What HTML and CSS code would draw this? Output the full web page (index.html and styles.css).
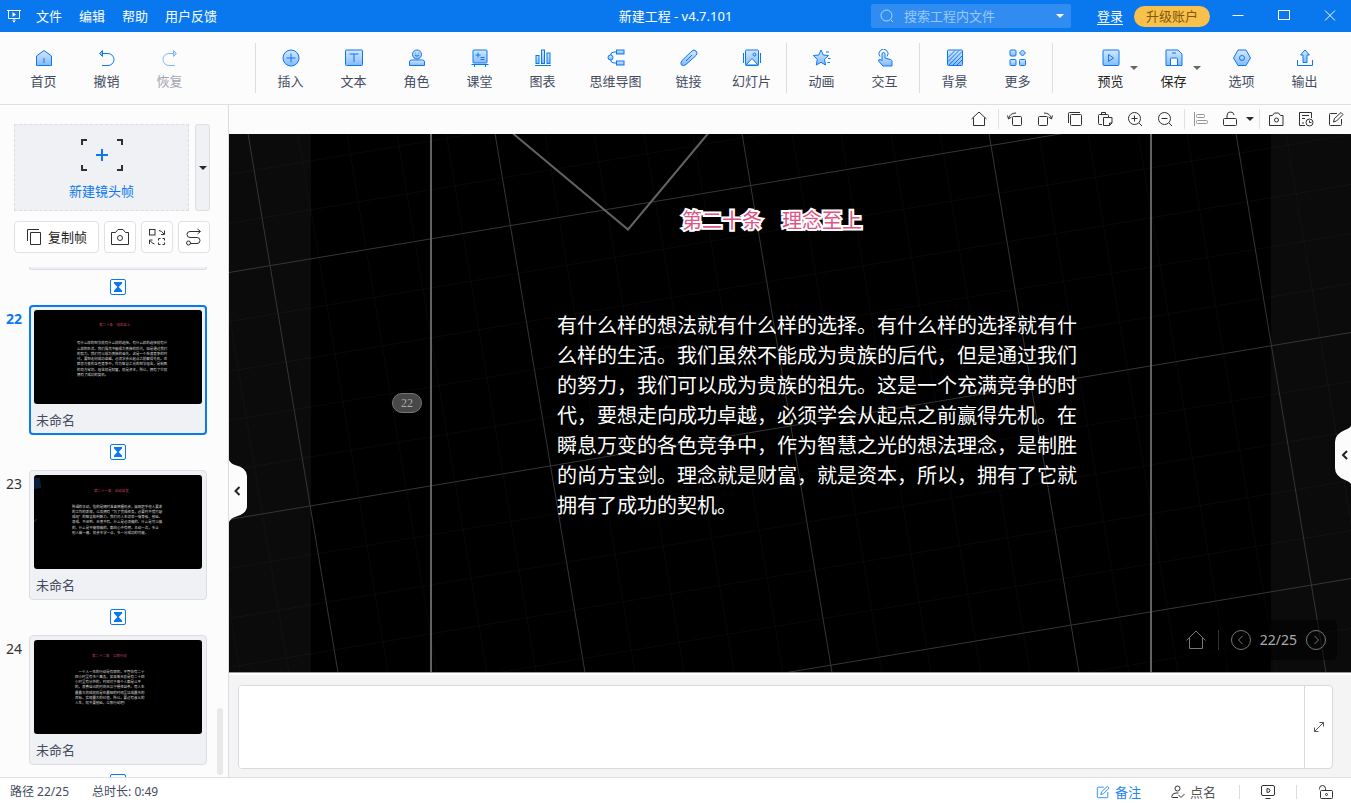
FILE: index.html
```html
<!DOCTYPE html>
<html lang="zh-CN">
<head>
<meta charset="utf-8">
<title>新建工程 - v4.7.101</title>
<link rel="stylesheet" href="styles.css">
</head>
<body>
<svg class="defs" width="0" height="0" aria-hidden="true">
  <defs>
    <linearGradient id="g" x1="0" y1="0" x2="0" y2="1"><stop offset="0" stop-color="#d5e8ff"/><stop offset="1" stop-color="#85bbfc"/></linearGradient>
    <symbol id="clock" viewBox="0 0 16 16"><rect x=".5" y=".5" width="15" height="15" rx="1.5" fill="#fff" stroke="#0a78f0"/><path d="M4 3h8v1.500L8.700 8 12 11.500V13H4v-1.500L7.300 8 4 4.500z" fill="#0a78f0"/></symbol>
  </defs>
</svg>

<header class="titlebar">
  <nav class="menu">
    <svg class="logo" width="14" height="14" viewBox="0 0 14 14" fill="none" stroke="#fff"><path d="M0 1.500h14M1.500 1.500v8h11v-8M7 9.500v4M5.500 11.500L7 13l1.500-1.500"/><path d="M5.500 3v5L9 5.500z" fill="#fff" stroke="none"/></svg>
    <button>文件</button><button>编辑</button><button>帮助</button><button>用户反馈</button>
  </nav>
  <h1 class="title">新建工程 - v4.7.101</h1>
  <div class="account">
    <label class="search">
      <svg width="14" height="14" viewBox="0 0 14 14" fill="none" stroke="#b5d8ff"><circle cx="6.500" cy="6.500" r="5.500"/><path d="M11 11l2 2"/></svg>
      <input type="text" placeholder="搜索工程内文件" aria-label="搜索工程内文件">
      <i class="caret light"></i>
    </label>
    <a class="login" href="#">登录</a>
    <button class="upgrade">升级账户</button>
    <div class="window-controls">
      <button aria-label="最小化"><svg width="12" height="12" viewBox="0 0 12 12" stroke="#fff"><path d="M.5 5.500h11"/></svg></button>
      <button aria-label="最大化"><svg width="12" height="12" viewBox="0 0 12 12" fill="none" stroke="#fff"><rect x=".5" y=".5" width="11" height="9"/></svg></button>
      <button aria-label="关闭"><svg width="12" height="12" viewBox="0 0 12 12" stroke="#fff"><path d="M1 .5l10 10M11 .5L1 10.500"/></svg></button>
    </div>
  </div>
</header>

<div class="toolbar">
  <div class="tools start">
    <button class="tool"><svg viewBox="0 0 18 18"><path d="M1.500 16.500V7L9 1.500 16.500 7v9.500z"/><path d="M9 9v5"/></svg>首页</button>
    <button class="tool open"><svg viewBox="0 0 18 18"><path d="M3 4.500h7a6 6 0 0 1 0 12H4"/><path d="M4.500 1.500L1.500 4.500l3 3z" fill="#85bbfc"/></svg>撤销</button>
    <button class="tool open off" disabled><svg viewBox="0 0 18 18"><path d="M14 4.500H8a6 6 0 0 0 0 12h6"/><path d="M12.500 1.500l3 3-3 3z" fill="#85bbfc"/></svg>恢复</button>
  </div>
  <div class="tools">
    <button class="tool"><svg viewBox="0 0 18 18"><circle cx="9" cy="9" r="8"/><path d="M9 4.500v9M4.500 9h9"/></svg>插入</button>
    <button class="tool"><svg viewBox="0 0 18 18"><rect x=".5" y="1" width="17" height="15.500" rx="1"/><path d="M4.500 5h9M9 5v8"/></svg>文本</button>
    <button class="tool"><svg viewBox="0 0 18 18"><circle cx="9" cy="5.500" r="4.500"/><path d="M1.500 16.500v-3.500q0-2 2-2h11q2 0 2 2v3.500z"/><path d="M7 6q2 2.500 4 0M7 4h.6M10.500 4h.6" fill="none"/></svg>角色</button>
    <button class="tool"><svg viewBox="0 0 18 18"><rect x="2" y="1" width="14" height="13" rx="1"/><path d="M.5 15.500h17M3.500 16v2M14.500 16v2M4.500 6h5M7 3.500v5M9.500 8.500h4M9.500 10.500h4"/></svg>课堂</button>
    <button class="tool"><svg viewBox="0 0 18 18"><rect x="2" y="6.500" width="3" height="8"/><rect x="7.500" y="1" width="3" height="13.500"/><rect x="13" y="4" width="3" height="10.500"/><path d="M1 16.500h16"/></svg>图表</button>
    <button class="tool wide"><svg viewBox="0 0 18 18"><path d="M9 3H7Q3.500 3 3.500 6.500M9 14H7q-3.500 0-3.500-4" fill="none"/><circle cx="3.500" cy="8.500" r="2.500"/><rect x="9.500" y="1" width="7.500" height="4"/><rect x="9.500" y="12" width="7.500" height="4"/></svg>思维导图</button>
    <button class="tool"><svg viewBox="0 0 18 18"><path d="M1.500 16q-1.500-2 .5-4.500L12 2q2-2 4 0t0 4.500L6 15.500q-2.500 2-4.500.5z"/><path d="M6 12l6-6"/></svg>链接</button>
    <button class="tool"><svg viewBox="0 0 18 18"><rect x="2.500" y="1" width="13" height="15.500" rx="1"/><path d="M.5 4v10M17.500 4v10"/><path d="M3 16l6-6.500 6 6.500z" fill="#fff"/><circle cx="11.500" cy="5.500" r="1.500"/></svg>幻灯片</button>
  </div>
  <div class="tools">
    <button class="tool"><svg viewBox="0 0 18 18"><path d="M8 1l2.200 5 5.300.5-4 3.800 1 5.700L8 13.300 3.300 16l1-5.700-4-3.800L5.800 6z"/><path d="M13 3h3M15 9.500h2.500M14.500 13.500h2.500"/></svg>动画</button>
    <button class="tool"><svg viewBox="0 0 18 18"><path d="M4 7.500A4.500 4.500 0 1 1 11 7.500" fill="none"/><path d="M6 11.500V5q0-1.500 1.500-1.500T9 5v4l5.500 1.500q1.500.5 1.500 2v4.500H7l-4.500-5q0-2 1.500-1.500z"/></svg>交互</button>
  </div>
  <div class="tools">
    <button class="tool"><svg viewBox="0 0 18 18"><rect x="1.500" y="1" width="15" height="15.500" rx="1"/><path d="M2 8.500L9 1.500M2 12.500L13 1.500M3 16L16 2.500M7 16l9-9M11 16l5-5"/></svg>背景</button>
    <button class="tool"><svg viewBox="0 0 18 18"><rect x="1" y="1" width="6" height="6" rx="1"/><path d="M13.500 1l3 3-3 3-3-3z"/><rect x="1" y="10.500" width="6" height="6" rx="1"/><rect x="10.500" y="10.500" width="6" height="6" rx="1"/></svg>更多</button>
  </div>
  <div class="tools end">
    <button class="tool dark"><svg viewBox="0 0 18 18"><rect x="1" y="1" width="16" height="15.500" rx="1"/><path d="M6.500 5.500v7l5-3.500z"/></svg>预览<i class="caret"></i></button>
    <button class="tool dark"><svg viewBox="0 0 18 18"><path d="M1 1h12l4 4v11.500H1z"/><path d="M5.500 16.500V10q0-1 1-1h5q1 0 1 1v6.500z" fill="#fff"/><path d="M7 4h4"/></svg>保存<i class="caret"></i></button>
    <button class="tool gap"><svg viewBox="0 0 18 18"><path d="M5 1h8l4.500 8-4.500 7.500H5L.5 9z"/><circle cx="9" cy="9" r="2.500"/></svg>选项</button>
    <button class="tool"><svg viewBox="0 0 18 18"><path d="M9 1l4.500 5H11v7.500H7V6H4.500z"/><path d="M1.500 11v5.500h15V11" fill="none"/></svg>输出</button>
  </div>
</div>

<main class="workspace">
  <aside class="sidebar">
    <div class="new-row">
      <button class="new-frame">
        <svg width="42" height="32" viewBox="0 0 42 32" fill="none"><path d="M1 6V1h5M36 1h5v5M1 26v5h5M36 31h5v-5" stroke="#303030" stroke-width="2"/><path d="M21 10v12M15 16h12" stroke="#0a78f0" stroke-width="2"/></svg>
        新建镜头帧
      </button>
      <button class="new-more" aria-label="更多镜头帧"><i class="caret black"></i></button>
    </div>
    <div class="frame-actions">
      <button class="copy"><svg width="16" height="18" viewBox="0 0 16 18"><path d="M1.500 13V1.500H13M4.500 4.500h10v12h-10z"/></svg>复制帧</button>
      <button aria-label="截图"><svg width="20" height="18" viewBox="0 0 20 18"><path d="M1.500 16.500v-12h4L8 1.500h5l2.500 3h3v12z"/><circle cx="10" cy="10" r="2.500"/></svg></button>
      <button aria-label="替换"><svg width="18" height="18" viewBox="0 0 18 18"><rect x="1.500" y="1.500" width="5.500" height="5.500"/><path d="M11 2.500q2.500 0 5 3.500M16.500 2.500v4h-3.500M1.500 16v-4h3M2 12.500q2 3 4.500 3.500M10.500 12.500v-2h2M14.500 10.500h2v2M16.500 14.500v2h-2M12.500 16.500h-2v-2"/></svg></button>
      <button aria-label="路径"><svg width="18" height="18" viewBox="0 0 18 18"><path d="M15 3.500H5a3 3 0 0 0 0 6h7a3 3 0 0 1 0 6H5M12.500 1l3 2.500-3 2.500"/><circle cx="3.500" cy="15" r="2"/></svg></button>
    </div>
    <div class="frames">
      <div class="frame-edge"></div>
      <svg class="clock"><use href="#clock"/></svg>
      <article class="frame selected">
        <span class="num">22</span>
        <div class="card">
          <svg class="thumb" viewBox="0 0 966 540"><text class="thumb-title" x="374" y="94">第二十条　理念至上</text>
            <g class="thumb-body"><text x="247" y="198">有什么样的想法就有什么样的选择。有什么样的选择就有什</text><text x="247" y="228">么样的生活。我们虽然不能成为贵族的后代，但是通过我们</text><text x="247" y="258">的努力，我们可以成为贵族的祖先。这是一个充满竞争的时</text><text x="247" y="288">代，要想走向成功卓越，必须学会从起点之前赢得先机。在</text><text x="247" y="318">瞬息万变的各色竞争中，作为智慧之光的想法理念，是制胜</text><text x="247" y="348">的尚方宝剑。理念就是财富，就是资本，所以，拥有了它就</text><text x="247" y="378">拥有了成功的契机。</text></g></svg>
          <p>未命名</p>
        </div>
      </article>
      <svg class="clock"><use href="#clock"/></svg>
      <article class="frame">
        <span class="num">23</span>
        <div class="card">
          <svg class="thumb" viewBox="0 0 966 540"><path d="M0 20l34-4 8 58-42 6z" fill="#0b1c3c"/><path d="M0 268l16-14" stroke="#555" stroke-width="4"/><text class="thumb-title" x="345" y="100">第二十一条　自动自发</text>
            <g class="thumb-body"><text x="218" y="188">所谓的主动，指的是随时准备把握机会，展现超乎他人要求</text><text x="218" y="218">的工作的表现，以及拥有“为了完成任务，必要时不惜打破</text><text x="218" y="248">成规”的智慧和判断力。我们对人生切忌一味等候、拖延、</text><text x="218" y="278">身成、不迟到、无责不有。什么是必须做的、什么是可以做</text><text x="218" y="308">的、什么是不能够做的，都应心中有明。主动一次，多让</text><text x="218" y="338">别人做一遍、就会多学一点，多一分成功的可能。</text></g></svg>
          <p>未命名</p>
        </div>
      </article>
      <svg class="clock"><use href="#clock"/></svg>
      <article class="frame">
        <span class="num">24</span>
        <div class="card">
          <svg class="thumb" viewBox="0 0 966 540"><text class="thumb-title" x="334" y="98">第二十二条　立即行动</text>
            <g class="thumb-body"><text x="256" y="188">一个人一生的行动是有限的，不管你有二十</text><text x="236" y="218">四小时里有多少事务，如果每天总是有二十四</text><text x="236" y="248">小时里有分外的，时间对于每个人都是公平</text><text x="236" y="278">的，浪费自己的时间无异于慢性自杀。而人生</text><text x="236" y="308">最最大的成就就是在最短的时间里达成最多的</text><text x="236" y="338">目标，实现最大的价值。所以，要过有意义的</text><text x="236" y="368">人生，就不要拖延，立即行动吧！</text></g></svg>
          <p>未命名</p>
        </div>
      </article>
      <svg class="clock"><use href="#clock"/></svg>
      <div class="scroll-thumb"></div>
    </div>
  </aside>

  <section class="editor">
    <div class="canvas-tools">
      <button aria-label="主页"><svg viewBox="0 0 16 16"><path d="M.5 8L8 1l7.500 7M2.500 6.500v8h11v-8"/></svg></button>
      <i class="rule"></i>
      <button aria-label="左转"><svg viewBox="0 0 16 16"><rect x="5.500" y="5.500" width="9" height="9" rx="1"/><path d="M1.500 7.500Q3 2 9 2M.5 4.500l1 3.500 3-2"/></svg></button>
      <button aria-label="右转"><svg viewBox="0 0 16 16"><rect x="1.500" y="5.500" width="9" height="9" rx="1"/><path d="M14.500 7.500Q13 2 7 2M15.500 4.500l-1 3.500-3-2"/></svg></button>
      <button aria-label="复制"><svg viewBox="0 0 16 16"><path d="M1.500 12V2.500q0-1 1-1H13"/><rect x="3.500" y="3.500" width="11" height="11" rx="1"/></svg></button>
      <button aria-label="粘贴"><svg viewBox="0 0 16 16"><path d="M5 13.500H2.500q-1 0-1-1v-8q0-1 1-1h8q1 0 1 1V6M4.500 3.500v-2h4v2"/><path d="M6.500 6.500H15V12l-2.500 2.500h-6zM12.500 14.500V12H15"/></svg></button>
      <button aria-label="放大"><svg viewBox="0 0 16 16"><circle cx="7.500" cy="7.500" r="6"/><path d="M12 12l3 3M7.500 4.500v6M4.500 7.500h6"/></svg></button>
      <button aria-label="缩小"><svg viewBox="0 0 16 16"><circle cx="7.500" cy="7.500" r="6"/><path d="M12 12l3 3M4.500 7.500h6"/></svg></button>
      <i class="rule"></i>
      <button class="faded" aria-label="对齐"><svg viewBox="0 0 16 16"><path d="M1.500 1v14"/><rect x="3.500" y="3.500" width="8" height="3" rx="1"/><rect x="3.500" y="9.500" width="11" height="3" rx="1"/></svg></button>
      <button class="lock" aria-label="锁定"><svg viewBox="0 0 16 16"><rect x="1.500" y="7.500" width="13" height="7" rx="1"/><path d="M5 7.500V5a3.500 3.500 0 0 1 7-1"/></svg></button>
      <button class="lock-more" aria-label="锁定选项"><i class="caret black"></i></button>
      <i class="rule"></i>
      <button aria-label="截图"><svg viewBox="0 0 16 16"><path d="M1.500 14.500v-10h3L6.500 2h4l2 2.500h2.500v10z"/><circle cx="8.500" cy="9" r="2"/></svg></button>
      <button aria-label="历史"><svg viewBox="0 0 16 16"><path d="M7 14.500H1.500v-13h12V7M4 4.500h7M4 7.500h3M4 12h2"/><circle cx="11.500" cy="11.500" r="3.500"/><path d="M11.500 9.500v2h2"/></svg></button>
      <button aria-label="编辑"><svg viewBox="0 0 16 16"><path d="M9 2.500H2.500q-1 0-1 1v10q0 1 1 1h10q1 0 1-1V8M5.500 11l1-3.500 6.500-6 2 2-6.500 6.500z"/></svg></button>
    </div>

    <div class="canvas">
      <svg class="grid" viewBox="0 0 1122 539" preserveAspectRatio="xMidYMid slice" fill="none">
        <path d="M0 0H82V539H0zM1042 0H1122V539H1042z" fill="#0b0b0b"/>
        <g stroke="#fff" stroke-opacity=".03">
          <path d="M-79 0l90 539M-30 0l90 539M69 0l90 539M118 0l90 539M168 0l90 539M217 0l90 539M316 0l90 539M365 0l90 539M415 0l90 539M464 0l90 539M563 0l90 539M612 0l90 539M662 0l90 539M711 0l90 539M810 0l90 539M859 0l90 539M909 0l90 539M958 0l90 539M1057 0l90 539"/>
          <path d="M0 41l1122-187M0 90l1122-187M0 188l1122-187M0 238l1122-187M0 287l1122-187M0 337l1122-187M0 435l1122-187M0 485l1122-187M0 534l1122-187M0 584l1122-187M0 682l1122-187M0 731l1122-187"/>
        </g>
        <path d="M19 0l90 539M266 0l90 539M513 0l90 539M760 0l90 539M1007 0l90 539M0 139l1122-187M0 386l1122-187M0 632l1122-187" stroke="#363636"/>
        <path d="M284 0l115 96L479 0" stroke="#626262" stroke-width="2"/>
        <path d="M202 0v539M922 0v539" stroke="#626262" stroke-width="2"/>
      </svg>
      <div class="slide">
        <h2>第二十条　理念至上</h2>
        <p>有什么样的想法就有什么样的选择。有什么样的选择就有什么样的生活。我们虽然不能成为贵族的后代，但是通过我们的努力，我们可以成为贵族的祖先。这是一个充满竞争的时代，要想走向成功卓越，必须学会从起点之前赢得先机。在瞬息万变的各色竞争中，作为智慧之光的想法理念，是制胜的尚方宝剑。理念就是财富，就是资本，所以，拥有了它就拥有了成功的契机。</p>
        <span class="badge">22</span>
      </div>
      <button class="tab left" aria-label="收起左栏"><svg width="18" height="62" viewBox="0 0 18 62"><path d="M0 0q2 4 6 5 12 3 12 11v30q0 8-12 11-4 1-6 5z" fill="#fcfcfc"/><path d="M10.500 27l-4 4 4 4" fill="none" stroke="#222" stroke-width="2"/></svg></button>
      <button class="tab right" aria-label="展开右栏"><svg width="16" height="58" viewBox="0 0 16 58"><path d="M16 0q-1 2-6 4-10 4-10 12v26q0 8 10 12 5 2 6 4z" fill="#fcfcfc"/><path d="M12 25l-4 4 4 4" fill="none" stroke="#222" stroke-width="2"/></svg></button>
      <div class="pager">
        <button aria-label="主页"><svg width="20" height="20" viewBox="0 0 20 20"><path d="M.5 10.500L10 1l9.500 9.500M3.500 8v10.500h13V8"/></svg></button>
        <i></i>
        <button aria-label="上一帧"><svg width="20" height="20" viewBox="0 0 20 20"><circle cx="10" cy="10" r="9.500"/><path d="M11.500 6l-4 4 4 4"/></svg></button>
        <span>22/25</span>
        <button aria-label="下一帧"><svg width="20" height="20" viewBox="0 0 20 20"><circle cx="10" cy="10" r="9.500"/><path d="M8.500 6l4 4-4 4"/></svg></button>
      </div>
    </div>

    <div class="notes">
      <div class="notes-box">
        <textarea aria-label="备注"></textarea>
        <button aria-label="展开备注"><svg width="12" height="12" viewBox="0 0 12 12" fill="none" stroke="#555"><path d="M1.500 10.500l9-9M6.500 1.500h4v4M5.500 10.500h-4v-4"/></svg></button>
      </div>
    </div>
  </section>
</main>

<footer class="status">
  <span>路径 22/25</span>
  <span>总时长: 0:49</span>
  <div class="status-tools">
    <button class="note"><svg width="14" height="14" viewBox="0 0 16 16"><path d="M9 2.500H2.500q-1 0-1 1v10q0 1 1 1h10q1 0 1-1V8M5.500 11l1-3.500 6.500-6 2 2-6.500 6.500z"/></svg>备注</button>
    <button class="roll"><svg width="14" height="14" viewBox="0 0 14 14"><circle cx="6.500" cy="3.500" r="2.500"/><path d="M7 12.500H1.500q-1 0-.8-1Q1.500 8 5 8h2.500M7.500 10l2.500 2.500L13.500 9"/></svg>点名</button>
    <i></i>
    <button class="icon" aria-label="演示"><svg width="16" height="14" viewBox="0 0 16 14"><rect x="1.500" y=".5" width="13" height="10" rx="1.500"/><path d="M5.500 13.500h5M7 3.500v4q3 0 3-2t-3-2"/></svg></button>
    <i></i>
    <button class="icon" aria-label="解锁"><svg width="16" height="14" viewBox="0 0 16 14"><rect x="2.500" y="5.500" width="12" height="8" rx="1"/><path d="M7.500 5.500V3.500a3 3 0 0 0-6 0V4.500"/><circle cx="8.500" cy="9.500" r="1"/></svg></button>
  </div>
</footer>
</body>
</html>
```
FILE: styles.css
```css
* { box-sizing: border-box; }
html, body { height: 100%; }
body {
  margin: 0;
  display: flex;
  flex-direction: column;
  overflow: hidden;
  background: #fcfcfc;
  color: #454b5f;
  font: 13px/20px "Noto Sans", "Noto Sans CJK SC", sans-serif;
}
button {
  padding: 0;
  border: 0;
  background: none;
  color: inherit;
  font: inherit;
  display: flex;
  align-items: center;
  justify-content: center;
}
svg { display: block; flex: none; }
.defs { position: absolute; }
p, h1, h2 { margin: 0; font-size: 13px; font-weight: 400; }

.caret {
  flex: none;
  border: 4px solid transparent;
  border-top-color: #666;
  border-bottom: 0;
}
.caret.light { border-top-color: #fff; }
.caret.black { border-top-color: #2a2a2a; }

/* Title bar */
.titlebar {
  flex: none;
  height: 32px;
  display: grid;
  grid-template-columns: 1fr auto 1fr;
  align-items: center;
  background: #0977ed;
  color: #fff;
}
.menu { display: flex; align-items: center; gap: 17px; padding-left: 7px; }
.logo { margin-right: -2px; }
.account { display: flex; align-items: center; justify-content: flex-end; }
.search {
  width: 200px;
  height: 24px;
  padding: 0 7px 0 9px;
  display: flex;
  align-items: center;
  gap: 10px;
  border-radius: 2px;
  background: #308cf0;
}
.search input {
  flex: 1;
  min-width: 0;
  padding: 0;
  border: 0;
  outline: 0;
  background: none;
  color: #fff;
  font: inherit;
}
.search input::placeholder { color: #9bc8fa; opacity: 1; }
.login { margin: 0 11px 0 26px; color: #fff; text-underline-offset: 3px; }
.upgrade { width: 76px; height: 21px; border-radius: 11px; background: #fac04c; color: #7c5a10; }
.window-controls { display: flex; gap: 3px; margin-left: 6px; }
.window-controls button { width: 43px; height: 28px; }

/* Main toolbar */
.toolbar {
  flex: none;
  height: 73px;
  display: flex;
  align-items: center;
  border-bottom: 1px solid #dedfe1;
}
.tools { display: flex; height: 50px; padding: 0 3px; border-right: 1px solid #dcdde0; }
.tools.start { padding: 0 54px 0 12px; }
.tools.end { margin-left: auto; padding: 0 15px 0 0; border: 0; }
.tool {
  position: relative;
  width: 63px;
  padding-top: 4px;
  flex-direction: column;
  gap: 4px;
}
.tool.wide { width: 83px; }
.tool.dark { color: #222; }
.tool.gap { margin-left: 5px; }
.tool.off { opacity: .5; }
.tool svg { width: 18px; height: 18px; fill: url(#g); stroke: #0a78f0; }
.tool.open svg { fill: none; }
.tool .caret { position: absolute; right: 4px; top: 23px; }

.workspace { flex: 1; min-height: 0; display: flex; }

/* Frame list */
.sidebar {
  flex: none;
  width: 229px;
  padding-top: 19px;
  display: flex;
  flex-direction: column;
  border-right: 1px solid #d9dce2;
}
.new-row { display: flex; gap: 6px; padding: 0 18px 0 14px; height: 87px; }
.new-frame {
  flex: 1;
  padding-top: 4px;
  flex-direction: column;
  gap: 10px;
  border: 1px dashed #dbdde0;
  background: #f0f1f4;
  color: #0a78f0;
}
.new-more { width: 15px; border: 1px solid #dcdee2; border-radius: 3px; background: #f0f1f4; }
.frame-actions { display: flex; gap: 5px; padding: 0 18px 0 14px; margin: 10px 0 14px; }
.frame-actions button {
  width: 32px;
  height: 32px;
  border: 1px solid #dfe1e5;
  border-radius: 4px;
  background: #fff;
  color: #222;
}
.frame-actions .copy { flex: 1; gap: 6px; }
.frame-actions svg, .canvas-tools svg, .status svg { fill: none; stroke: #303030; }
.frames {
  position: relative;
  flex: 1;
  min-height: 0;
  overflow: hidden;
  padding: 0 21px 0 29px;
}
.frame-edge {
  height: 3px;
  border: 1px solid #d9dce2;
  border-top: 0;
  border-radius: 0 0 4px 4px;
  background: #f0f1f4;
}
.clock { width: 16px; height: 16px; margin: 9px auto 10px; }
.frame { position: relative; }
.num { position: absolute; left: -29px; top: 4px; width: 22px; text-align: right; color: #333; font-size: 14px; }
.selected .num { color: #0a78f0; font-weight: 700; }
.card {
  height: 130px;
  padding: 4px;
  border: 1px solid #dcdee2;
  border-radius: 4px;
  background: #f0f1f4;
}
.selected .card { padding: 3px; border: 2px solid #0a78f0; }
.thumb { width: 100%; height: 94px; border-radius: 3px; background: #000; }
.thumb-title { fill: #c03c68; font: 20px "Noto Sans CJK SC", sans-serif; }
.thumb-body { fill: #ddd; font: 20px "Noto Sans CJK SC", sans-serif; }
.card p { margin: 6px 2px; }
.scroll-thumb { position: absolute; right: 5px; bottom: 2px; width: 6px; height: 67px; border-radius: 3px; background: #e8e8e8; }

/* Editor */
.editor { flex: 1; min-width: 0; display: flex; flex-direction: column; }
.canvas-tools { flex: none; height: 29px; padding-bottom: 1px; display: flex; justify-content: flex-end; align-items: center; }
.canvas-tools button { width: 30px; height: 28px; }
.canvas-tools svg { width: 16px; height: 16px; }
.canvas-tools .lock { width: 28px; }
.canvas-tools .lock-more { width: 11px; }
.canvas-tools .faded { opacity: .5; }
.rule { width: 1px; height: 20px; margin: 0 1px 0 4px; background: #e0e1e4; }

.canvas {
  position: relative;
  flex: 1;
  min-height: 0;
  overflow: hidden;
  background: #000;
  border-bottom: 1px solid #999;
}
.grid { position: absolute; inset: 0; width: 100%; height: 100%; }
.slide {
  position: relative;
  width: 720px;
  margin: 0 auto;
  padding: 71px 69px 0 127px;
  font-family: "Noto Sans CJK SC", sans-serif;
}
.slide h2 {
  margin-left: 125px;
  font-size: 20px;
  line-height: 30px;
  color: #dd5584;
  -webkit-text-stroke: 4px #fff;
  paint-order: stroke fill;
}
.slide p { margin-top: 75px; font-size: 20px; line-height: 30px; color: #fff; }
.badge {
  position: absolute;
  left: -38px;
  top: 259px;
  width: 30px;
  height: 20px;
  border: 1px solid #777;
  border-radius: 10px;
  background: #484848;
  color: #aaa;
  font: 12px/18px "Liberation Serif", serif;
  text-align: center;
}
.tab { position: absolute; }
.tab.left { left: 0; top: 326px; }
.tab.right { right: 0; top: 292px; }
.pager {
  position: absolute;
  right: 14px;
  bottom: 12px;
  height: 40px;
  padding: 0 11px;
  display: flex;
  align-items: center;
  gap: 9px;
  border-radius: 5px;
  background: rgba(0, 0, 0, .5);
  color: #aaa;
  font-size: 14px;
}
.pager svg { fill: none; stroke: #777; }
.pager i { width: 1px; height: 20px; margin: 0 3px; background: #333; }

.notes { flex: none; padding: 10px 18px 8px 9px; border-top: 2px solid #fff; background: #f4f4f4; }
.notes-box { height: 84px; display: flex; border: 1px solid #d5d9e2; border-radius: 4px; background: #fff; overflow: hidden; }
.notes textarea { flex: 1; padding: 8px; border: 0; outline: 0; resize: none; font: inherit; }
.notes button { width: 28px; border-left: 1px solid #d5d9e2; }

/* Status bar */
.status {
  flex: none;
  height: 26px;
  padding: 3px 17px 0 10px;
  display: flex;
  align-items: center;
  gap: 23px;
  border-top: 1px solid #e0e1e3;
  background: #fff;
  font-size: 12px;
}
.status-tools { margin-left: auto; display: flex; align-items: center; font-size: 13px; }
.status-tools button { gap: 5px; }
.status-tools i { width: 1px; height: 14px; background: #ddd; }
.status .note { margin-right: 30px; color: #1c84f5; }
.status .note svg { stroke: #1c84f5; }
.status .roll { margin-right: 23px; color: #555; }
.status .icon { width: 56px; }
.status .icon:last-child { width: 16px; margin-left: 21px; }
```
